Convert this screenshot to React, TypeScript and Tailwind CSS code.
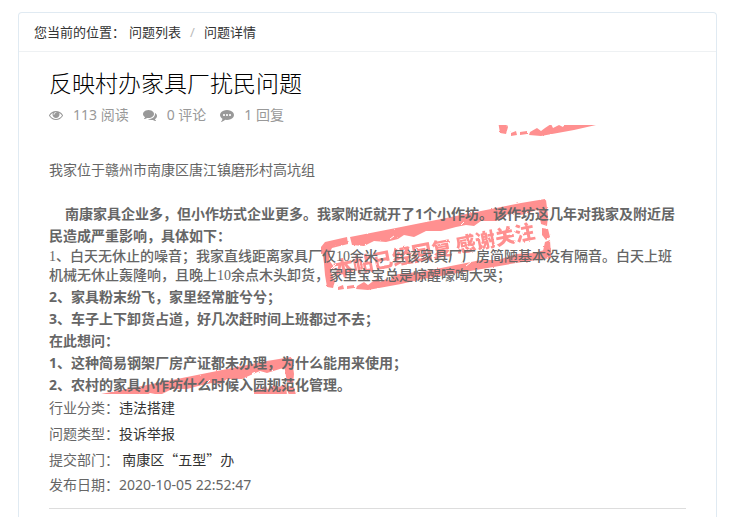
import React from 'react';

interface StatProps {
  icon: string;
  label: string;
}

interface StampProps {
  className: string;
  children?: React.ReactNode;
}

interface InfoRow {
  label: string;
  value: string;
  link?: boolean;
}

const EYE =
  'M1664 960q-152-236-381-353 61 104 61 225 0 185-131.5 316.5t-316.5 131.5-316.5-131.5-131.5-316.5q0-121 61-225-229 117-381 353 133 205 333.5 326.5t434.5 121.5 434.5-121.5 333.5-326.5zm-720-384q0-20-14-34t-34-14q-125 0-214.5 89.5t-89.5 214.5q0 20 14 34t34 14 34-14 14-34q0-86 61-147t147-61q20 0 34-14t14-34zm848 384q0 34-20 69-140 230-376.5 368.5t-499.5 138.5-499.5-139-376.5-368q-20-35-20-69t20-69q140-229 376.5-368t499.5-139 499.5 139 376.5 368q20 35 20 69z';
const COMMENTS =
  'M1408 768q0 139-94 257t-256.5 186.5-353.5 68.5q-86 0-176-16-124 88-278 128-36 9-86 16h-3q-11 0-20.5-8t-11.5-21q-1-3-1-6.5t.5-6.5 2-6l2.5-5 3.5-5.5 4-5 4.5-5 4-4.5q5-6 23-25t26-29.5 22.5-29 25-38.5 20.5-44q-124-72-195-177t-71-224q0-139 94-257t256.5-186.5 353.5-68.5 353.5 68.5 256.5 186.5 94 257zm384 256q0 120-71 224.5t-195 176.5q10 24 20.5 44t25 38.5 22.5 29 26 29.5 23 25q1 1 4 4.5t4.5 5 4 5 3.5 5.5l2.5 5 2 6 .5 6.5-1 6.5q-3 14-13 22t-22 7q-50-7-86-16-154-40-278-128-90 16-176 16-271 0-472-132 58 4 88 4 161 0 309-45t264-129q125-92 192-212t67-254q0-77-23-152 129 71 204 178t75 230z';
const COMMENTING =
  'M640 896q0-53-37.5-90.5t-90.5-37.5-90.5 37.5-37.5 90.5 37.5 90.5 90.5 37.5 90.5-37.5 37.5-90.5zm384 0q0-53-37.5-90.5t-90.5-37.5-90.5 37.5-37.5 90.5 37.5 90.5 90.5 37.5 90.5-37.5 37.5-90.5zm384 0q0-53-37.5-90.5t-90.5-37.5-90.5 37.5-37.5 90.5 37.5 90.5 90.5 37.5 90.5-37.5 37.5-90.5zm384 0q0 174-120 321.5t-326 233-450 85.5q-110 0-211-18-173 173-435 229-52 10-86 13-12 1-22-6t-13-18q-4-15 20-37 5-5 23.5-21.5t25.5-23.5 23.5-25.5 24-31.5 20.5-37 20-48 14.5-57.5 12.5-72.5q-146-90-229.5-216.5t-83.5-269.5q0-174 120-321.5t326-233 450-85.5 450 85.5 326 233 120 321.5z';

const infoRows: InfoRow[] = [
  { label: '行业分类：', value: '违法搭建', link: true },
  { label: '问题类型：', value: '投诉举报', link: true },
  { label: '提交部门：', value: '\u00a0南康区“五型”办', link: true },
  { label: '发布日期：', value: '2020-10-05 22:52:47' },
];

const Stat: React.FC<StatProps> = ({ icon, label }) => (
  <span className="flex items-center gap-[10px]">
    <svg viewBox="0 0 1792 1792" className="size-[14px]" fill="currentColor" aria-hidden="true">
      <path d={icon} />
    </svg>
    {label}
  </span>
);

// Worn rubber stamp behind the post text
const Stamp: React.FC<StampProps> = ({ className, children }) => (
  <svg
    viewBox="0 0 240 104"
    className={`absolute h-[104px] w-[240px] ${className}`}
    fill="#ff9090"
    aria-hidden="true"
  >
    <defs>
      <filter id="worn" x="0" y="0" width="100%" height="100%">
        <feTurbulence type="fractalNoise" baseFrequency="0.3" numOctaves="2" seed="4" />
        <feDisplacementMap in="SourceGraphic" scale="2" />
      </filter>
    </defs>
    <g filter="url(#worn)">
      {/* top edge */}
      <path d="M5 53L9 48L31 43L32 50L16 54L14 58L5 60Z" />
      <path d="M34 43L80 34L120 26L165 17L205 9L229 5L230 16L221 16L205 21L198 19L180 27L165 27L158 32L150 31L140 33L125 37L110 37L98 43L88 41L82 45L70 48L58 47L48 52L36 51Z" />
      {/* right edge */}
      <path d="M221 9L230 6L232 22L231 32L225 30L223 19Z" />
      <path d="M226 34L232 35L234 43L230 46L226 41Z" />
      <path d="M229 48L234 46L235 61L229 64L227 57Z" />
      {/* bottom edge */}
      <path d="M235 54L235 64L200 69L160 76L107 85L85 90L52 96L40 95L41 92L48 88L52 91L56 88L62 84L64 88L70 85L74 87L77 81L90 79L104 78L120 75L140 71L165 66L182 66L200 60L218 59Z" />
      <path d="M22 93L27 91L28 95L22 96ZM31 92L38 91L38 94L31 95Z" />
      {/* left edge */}
      <path d="M6 55L14 54L13 66L18 73L15 78L19 87L17 94L11 93L9 81L8 69Z" />
      {children}
    </g>
    <path
      d="M18 92L22 86M74 45L78 42M145 31L148 28M190 23L193 20M20 70L14 76M150 72L155 68"
      stroke="white"
      strokeWidth="1"
    />
  </svg>
);

export default function App() {
  return (
    <div className="bg-white pt-3 pr-3 pl-[18px] font-['Noto_Sans','Noto_Sans_CJK_SC',sans-serif] text-sm text-[#666]">
      <main className="rounded-t-sm border border-b-0 border-[#e0eaf2]">
        <nav
          aria-label="当前位置"
          className="flex h-[39px] items-center border-b border-[#eef1f3] px-[15px] text-[13px] text-[#333]"
        >
          <span className="mr-1">您当前的位置：</span>
          <a href="#list">问题列表</a>
          <span className="mx-[9px] text-[#bbb]">/</span>
          <a href="#detail">问题详情</a>
        </nav>

        <article className="px-[30px] pt-4 pb-2">
          <h1 className="text-[23px] leading-[30px] font-light text-black">反映村办家具厂扰民问题</h1>
          <div className="flex h-[26px] items-center gap-[14px] pt-2 text-[#999]">
            <Stat icon={EYE} label="113 阅读" />
            <Stat icon={COMMENTS} label="0 评论" />
            <Stat icon={COMMENTING} label="1 回复" />
          </div>

          <section className="relative mt-px overflow-hidden pt-[34px] leading-[22px]">
            <Stamp className="top-[69px] left-[267px]">
              <text
                x="19"
                y="83"
                transform="rotate(-11 19 83)"
                className="font-['Noto_Sans_CJK_SC',sans-serif] text-[20px] font-black"
              >
                本帖已经回复 感谢关注
              </text>
            </Stamp>
            <Stamp className="-top-[85px] left-[440px]" />
            <Stamp className="top-[227px] left-[13px]">
              <path d="M192 40L196 36L199 38L204 34L206 38L212 33L217 35L224 32L225 44L192 46Z" />
            </Stamp>
            <div className="relative -mb-0.5">
              <p className="mb-[22px]">我家位于赣州市南康区唐江镇磨形村高坑组</p>
              <p className="indent-4 font-bold">
                南康家具企业多，但小作坊式企业更多。我家附近就开了1个小作坊。该作坊这几年对我家及附近居民造成严重影响，具体如下：
              </p>
              <p className="mb-px font-['Liberation_Serif','Noto_Sans_CJK_SC',serif] leading-[19px] font-medium">
                1、白天无休止的噪音；我家直线距离家具厂仅10余米，且该家具厂厂房简陋基本没有隔音。白天上班
                <br />
                机械无休止轰隆响，且晚上10余点木头卸货，家里宝宝总是惊醒嚎啕大哭；
              </p>
              <div className="font-bold">
                <p>2、家具粉末纷飞，家里经常脏兮兮；</p>
                <p>3、车子上下卸货占道，好几次赶时间上班都过不去；</p>
                <p>在此想问：</p>
                <p>1、这种简易钢架厂房产证都未办理，为什么能用来使用；</p>
                <p>2、农村的家具小作坊什么时候入园规范化管理。</p>
              </div>
            </div>
          </section>

          <dl className="leading-[26px]">
            {infoRows.map((row) => (
              <div
                key={row.label}
                className={row.link ? "flex font-['Noto_Sans_CJK_SC',sans-serif]" : 'flex'}
              >
                <dt>{row.label}</dt>
                <dd>
                  {row.link ? (
                    <a href="#filter" className="text-[#333]">
                      {row.value}
                    </a>
                  ) : (
                    row.value
                  )}
                </dd>
              </div>
            ))}
          </dl>
          <hr className="mt-[10px] border-[#ddd]" />
        </article>
      </main>
    </div>
  );
}
